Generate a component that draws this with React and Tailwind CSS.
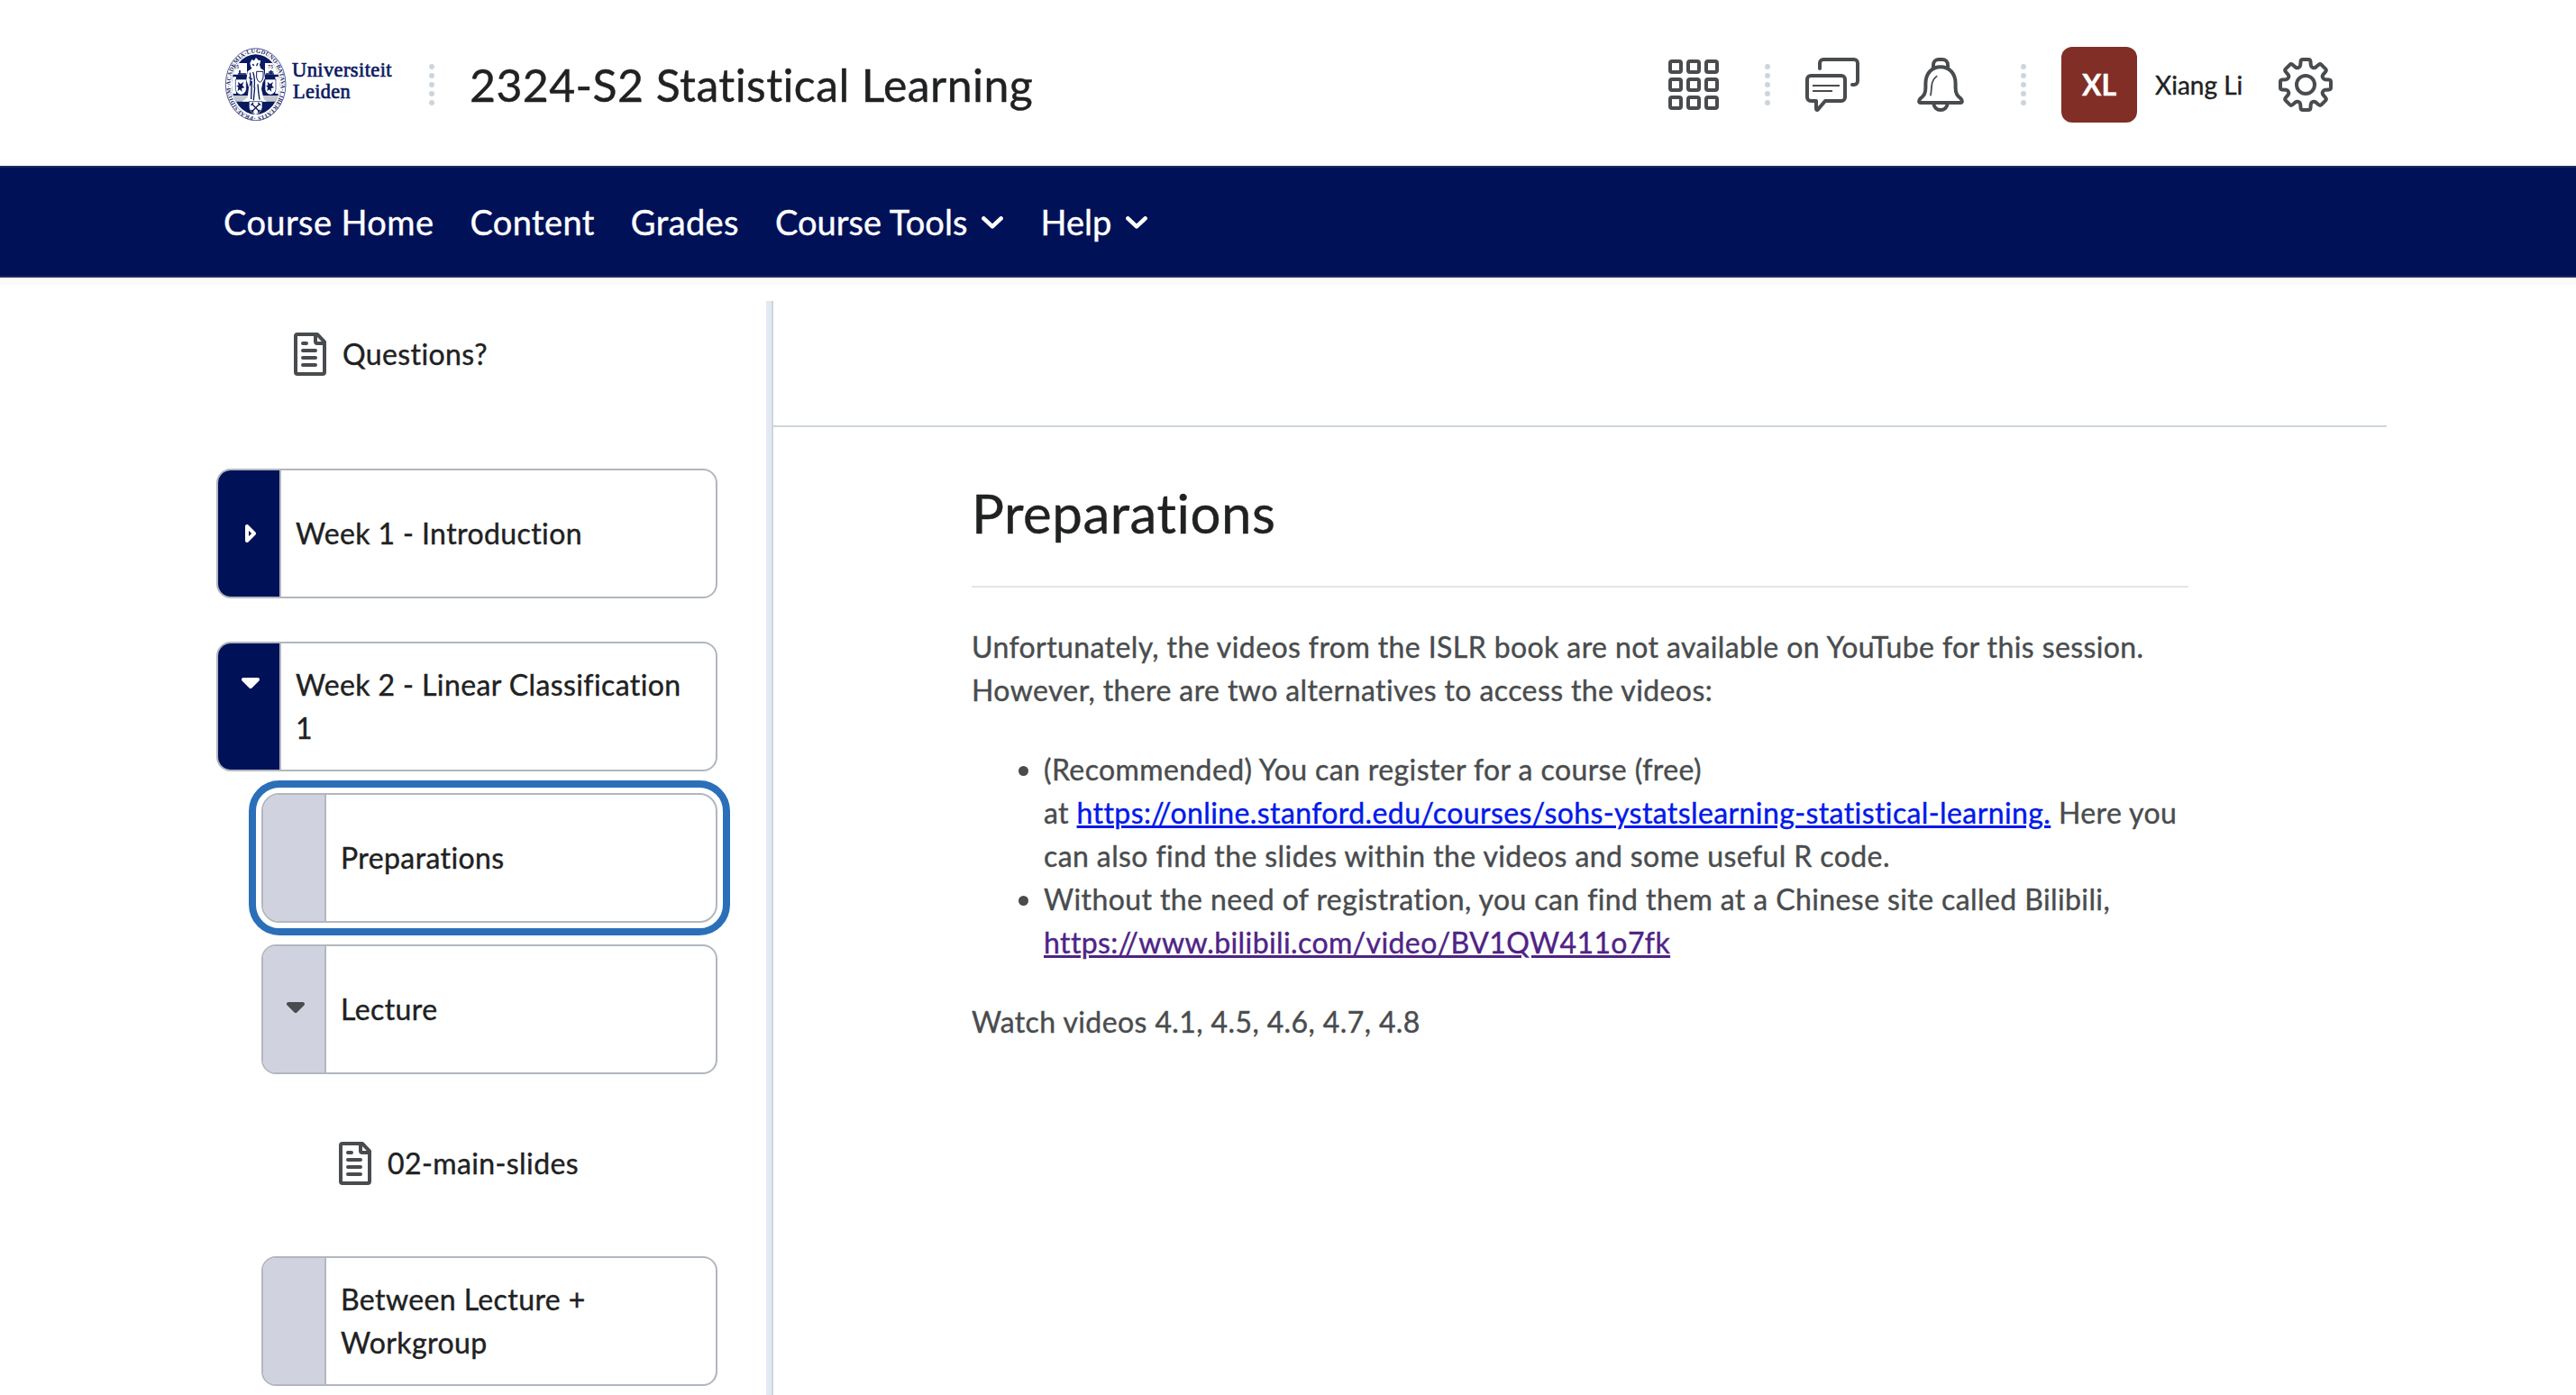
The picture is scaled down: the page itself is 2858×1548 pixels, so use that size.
const rot = (x, y, a) => [x * Math.cos(a) - y * Math.sin(a), x * Math.sin(a) + y * Math.cos(a)];

// Eight-toothed gear outline with softened corners, centred on 15,15.
function gearPath() {
  const pts = [];
  for (let i = 0; i < 8; i++) {
    const a = (i * Math.PI) / 4;
    for (const [x, y, r] of [[-3, -9.9, 0.9], [-2.6, -14, 1], [2.6, -14, 1], [3, -9.9, 0.9]]) {
      const [px, py] = rot(x, y, a);
      pts.push([px + 15, py + 15, r]);
    }
  }
  const n = pts.length;
  const toward = (p, q, d) => {
    const l = Math.hypot(q[0] - p[0], q[1] - p[1]);
    return `${(p[0] + ((q[0] - p[0]) * d) / l).toFixed(2)} ${(p[1] + ((q[1] - p[1]) * d) / l).toFixed(2)}`;
  };
  return (
    pts
      .map((p, i) => {
        const prev = pts[(i + n - 1) % n];
        const next = pts[(i + 1) % n];
        return `${i ? "L" : "M"}${toward(p, prev, p[2])}Q${p[0].toFixed(2)} ${p[1].toFixed(2)} ${toward(p, next, p[2])}`;
      })
      .join("") + "Z"
  );
}

const stroke = {
  fill: "none",
  stroke: "currentColor",
  strokeWidth: 2,
  strokeLinecap: "round",
  strokeLinejoin: "round",
};

function Dots() {
  return (
    <div className="flex flex-col gap-1">
      {[0, 1, 2, 3, 4].map((i) => (
        <span key={i} className="size-1.5 rounded-full bg-[#cdd5dc]" />
      ))}
    </div>
  );
}

function Seal() {
  return (
    <svg viewBox="0 0 240 270" className="h-[90px] w-[80px] shrink-0">
      <defs>
        <path id="ring" d="M119 238A84 106 0 0 1 119 26A84 106 0 0 1 119 238" />
        <clipPath id="inner">
          <ellipse cx="119" cy="131" rx="80" ry="100" />
        </clipPath>
      </defs>
      <ellipse cx="119" cy="131" rx="100" ry="120" fill="#fff" stroke="#5a6496" strokeWidth="3" />
      <text fontFamily="Liberation Serif" fontWeight="700" fontSize="20" fill="#1b2766">
        <textPath href="#ring" textLength="592">
          ·PRAESIDIUM·ACADEMIA·LUGDUNO·BATAVA·LIBERTATIS
        </textPath>
      </text>
      <ellipse cx="119" cy="131" rx="80" ry="100" fill="#0a1a60" />
      <g clipPath="url(#inner)">
        <path d="M40 60H90V98H40zM150 60H198V98H150z" fill="#fff" />
        <path d="M58 104H92V180H58zM148 104H182V180H148z" fill="#0a1a60" />
        <path d="M36 106H54V162H36zM184 106H204V162H184z" fill="#fff" />
        <path d="M36 168H204V188H36z" fill="#c3c9cf" />
        <path
          d="M52 114H88V148Q86 162 70 166Q54 162 52 148zM150 114H186V148Q184 162 168 166Q152 162 150 148z"
          fill="#fff"
          stroke="#0a1a60"
          strokeWidth="2"
        />
        <path
          d="M60 122l9 8 10-8-4 12 7 8-10 2 2 12-8-8-7 6 2-13-6-6 7-1zM158 122l9 8 10-8-4 12 7 8-10 2 2 12-8-8-7 6 2-13-6-6 7-1z"
          fill="#0a1a60"
        />
        <path d="M100 60l6-12 8 4 6-10 8 8 8 2-4 14 4 12 10 6 4 26-8 16-4 20 8 34 10 8H74l18-14 4-34-8-24 4-28 14-10-4-8z" fill="#fff" />
        <path
          d="M108 64l6 4M126 60l-4 10M100 92q4 26 0 44M110 90q8 24 4 52M106 120l-2 60M116 140l-4 44M126 130q2 30 6 52M96 108l12 6"
          fill="none"
          stroke="#0a1a60"
          strokeWidth="4"
        />
        <path d="M122 88h22v20q-2 12-11 16-9-4-11-16z" fill="#fff" stroke="#0a1a60" strokeWidth="3" />
        <path d="M60 96h28M152 96h28M66 84v14M170 84v14M162 90h16" stroke="#0a1a60" strokeWidth="5" />
        <path d="M97 188H141V208Q138 226 119 232Q100 226 97 208z" fill="#fff" stroke="#0a1a60" strokeWidth="2" />
        <path d="M106 196l26 26M132 196l-26 26" stroke="#0a1a60" strokeWidth="4" />
        <path d="M103 200l8-8M127 192l8 8M104 216l8 8M126 224l8-8" stroke="#0a1a60" strokeWidth="4" />
      </g>
      <text x="46" y="78" fontFamily="Liberation Serif" fontWeight="700" fontSize="16" fill="#1b2766">15</text>
      <text x="160" y="78" fontFamily="Liberation Serif" fontWeight="700" fontSize="16" fill="#1b2766">75</text>
    </svg>
  );
}

function Logo() {
  return (
    <div className="mt-px flex">
      <Seal />
      <svg viewBox="0 0 126 90" className="h-[90px] w-[126px] overflow-visible" fontFamily="Liberation Serif, serif" fontSize="23" fill="#0a1a60" stroke="#0a1a60" strokeWidth="0.7">
        <text x="0" y="35" textLength="111" lengthAdjust="spacingAndGlyphs">Universiteit</text>
        <text x="1" y="59" textLength="64" lengthAdjust="spacingAndGlyphs">Leiden</text>
      </svg>
    </div>
  );
}

function GridIcon() {
  return (
    <div className="grid size-14 grid-cols-3 gap-1">
      {Array.from({ length: 9 }, (_, i) => (
        <span key={i} className="size-4 rounded border-4 border-[#494c4e]" />
      ))}
    </div>
  );
}

function ChatIcon() {
  return (
    <svg viewBox="0 0 30 30" className="size-[60px]" {...stroke}>
      <path d="M8 6V3a2 2 0 0 1 2-2h17a2 2 0 0 1 2 2v10a2 2 0 0 1-2 2h-1" />
      <path d="M3 10h17a2 2 0 0 1 2 2v10a2 2 0 0 1-2 2h-9l-4 4.7c-.4.5-1 .3-1-.4V24H3a2 2 0 0 1-2-2V12a2 2 0 0 1 2-2z" />
      <path d="M4 15.5h15M4 18.5h11" strokeWidth="1" strokeLinecap="butt" />
    </svg>
  );
}

function BellIcon() {
  return (
    <svg viewBox="0 0 30 30" className="size-[60px]" {...stroke}>
      <path d="M11 5.5V4a3 3 0 0 1 3-3h2a3 3 0 0 1 3 3v1.5" />
      <path d="M15 5.1c-5 0-8.3 3.9-8.3 9.2v2.5c0 3.2-1 4.2-3 6-.8.9-1 2.2.3 2.2h22c1.3 0 1.1-1.3.3-2.2-2-1.8-3-2.8-3-6v-2.5c0-5.3-3.3-9.2-8.3-9.2z" />
      <path d="M11.2 25.5a3.8 3.5 0 0 0 7.6 0" />
      <path d="M12.8 10.3C9.2 13.2 10.4 16.4 9.5 20.8" strokeWidth="0.9" />
    </svg>
  );
}

function GearIcon() {
  return (
    <svg viewBox="0 0 30 30" className="size-[60px]" {...stroke}>
      <path d={gearPath()} />
      <circle cx="15" cy="15" r="5" />
    </svg>
  );
}

function DocIcon() {
  return (
    <svg viewBox="0 0 18 24" className="h-12 w-9 text-[#494c4e]" {...stroke}>
      <path d="M2 1h11l4 4.2V22a1 1 0 0 1-1 1H2a1 1 0 0 1-1-1V2a1 1 0 0 1 1-1z" />
      <path d="M12 1.5V5a1 1 0 0 0 1 1h4" />
      <path d="M5 6h2M5 10h7M5 14h7M5 18h7" />
    </svg>
  );
}

function Chevron() {
  return (
    <svg viewBox="0 0 24 14" className="mt-0.5 h-3.5 w-6" {...stroke} strokeWidth="4.6">
      <path d="M2.4 2.4L12 11.4L21.6 2.4" />
    </svg>
  );
}

function ArrowDown() {
  return (
    <svg viewBox="0 0 20 12" className="mb-1 ml-1 h-3 w-5">
      <path d="M2 2H18L10 10z" fill="currentColor" stroke="currentColor" strokeWidth="4" strokeLinejoin="round" />
    </svg>
  );
}

function ArrowRight() {
  return (
    <svg viewBox="0 0 12 20" className="ml-1 h-5 w-3">
      <path d="M2 2V18L10 10z" fill="none" stroke="currentColor" strokeWidth="4" strokeLinejoin="round" />
    </svg>
  );
}

function Module({ title, arrow, top, className = "" }) {
  return (
    <div className={`flex h-36 overflow-hidden border-2 border-[#b1b7be] ${top ? "w-[556px] rounded-2xl" : "ml-[50px] w-[506px]"} ${className}`}>
      <div
        className={`flex w-[70px] shrink-0 justify-center border-r-2 border-[#b1b7be] ${
          top ? "bg-[#001158] text-white" : "bg-[#d0d2e0] text-[#494c4e]"
        } ${arrow === "down-high" ? "pt-[38px]" : "items-center"}`}
      >
        {arrow === "right" && <ArrowRight />}
        {(arrow === "down" || arrow === "down-high") && <ArrowDown />}
      </div>
      <div className="flex items-center pl-4 pr-6">{title}</div>
    </div>
  );
}

function Topic({ title, className }) {
  return (
    <div className={`flex h-12 items-center ${className}`}>
      <DocIcon />
      <span className="ml-[18px]">{title}</span>
    </div>
  );
}

function Header() {
  return (
    <header className="flex h-[184px] items-center justify-between pl-[244px] pr-[270px] text-[#494c4e]">
      <div className="mt-1 flex items-center">
        <Logo />
        <div className="ml-[26px] mr-[39px]">
          <Dots />
        </div>
        <h1 className="text-[50px] leading-[60px] tracking-[0.4px] text-[#202122]">2324-S2 Statistical Learning</h1>
      </div>
      <div className="mt-1 flex items-center">
        <GridIcon />
        <div className="ml-[51px] mr-[39px]">
          <Dots />
        </div>
        <ChatIcon />
        <div className="ml-[60px]">
          <BellIcon />
        </div>
        <div className="ml-[59px] mr-[39px]">
          <Dots />
        </div>
        <div className="flex size-[84px] items-center justify-center rounded-xl bg-[#812e26] text-[32px] font-bold tracking-normal text-white">XL</div>
        <span className="ml-5 w-[97px] whitespace-nowrap text-[28px] leading-9 tracking-normal text-[#202122]">Xiang Li</span>
        <div className="ml-10">
          <GearIcon />
        </div>
      </div>
    </header>
  );
}

function Nav() {
  return (
    <nav className="flex h-[124px] items-center gap-10 border-y-2 border-[#1a295f] bg-[#001158] pl-[248px] text-[38px] tracking-[0.4px] text-white">
      <span>Course Home</span>
      <span>Content</span>
      <span>Grades</span>
      <span className="flex items-center gap-4 tracking-[0.05px]">
        Course Tools
        <Chevron />
      </span>
      <span className="ml-px flex items-center gap-4 tracking-[0.05px]">
        Help
        <Chevron />
      </span>
    </nav>
  );
}

export default function App() {
  return (
    <div className="flex h-[1548px] w-[2858px] flex-col overflow-hidden bg-white font-['Lato',sans-serif] text-[32px] leading-[48px] tracking-[0.4px] text-[#202122] [-webkit-text-stroke-width:0.4px]">
      <Header />
      <Nav />
      <div className="h-2 shrink-0 bg-[#fafafa]" />
      <div className="flex min-h-0 flex-1 pt-[18px]">
        <aside className="w-[850px] shrink-0 pl-[240px]">
          <Topic title="Questions?" className="mt-[35px] pl-[86px]" />
          <Module title="Week 1 - Introduction" arrow="right" top className="mt-[103px]" />
          <Module title="Week 2 - Linear Classification 1" arrow="down-high" top className="mt-12" />
          <Module
            title="Preparations"
            className="mt-6 rounded-[20px] outline-8 outline-offset-[6px] outline-[#2b6fb9]"
          />
          <Module title="Lecture" arrow="down" className="mt-6 rounded-2xl" />
          <Topic title="02-main-slides" className="mt-[75px] pl-[136px]" />
          <Module title="Between Lecture + Workgroup" className="mt-[79px] rounded-2xl" />
        </aside>
        <div className="w-2 shrink-0 border-r-2 border-[#cdd5dc] bg-[#e3e9f1]" />
        <main className="w-[1790px]">
          <div className="h-[140px] border-b-2 border-[#cdd5dc]" />
          <div className="ml-[220px] w-[1350px] text-[#494c4e]">
            <h2 className="mt-[59px] text-[60px] leading-[72px] tracking-[0.5px] text-[#202122]">Preparations</h2>
            <div className="mt-[45px] h-0.5 bg-[#e6e6e6]" />
            <p className="mt-[42px]">
              Unfortunately, the videos from the ISLR book are not available on YouTube for this session. However, there are two
              alternatives to access the videos:
            </p>
            <ul className="my-10 list-disc pl-20">
              <li>
                (Recommended) You can register for a course (free)
                <br />
                at{" "}
                <a className="text-[#0018ea] underline decoration-[3px] underline-offset-[2px]">
                  https://online.stanford.edu/courses/sohs-ystatslearning-statistical-learning.
                </a>{" "}
                Here you
                <br />
                can also find the slides within the videos and some useful R code.
              </li>
              <li>
                Without the need of registration, you can find them at a Chinese site called Bilibili,{" "}
                <a className="text-[#4f2386] underline decoration-[3px] underline-offset-[2px]">
                  https://www.bilibili.com/video/BV1QW411o7fk
                </a>
              </li>
            </ul>
            <p>Watch videos 4.1, 4.5, 4.6, 4.7, 4.8</p>
          </div>
        </main>
      </div>
    </div>
  );
}
